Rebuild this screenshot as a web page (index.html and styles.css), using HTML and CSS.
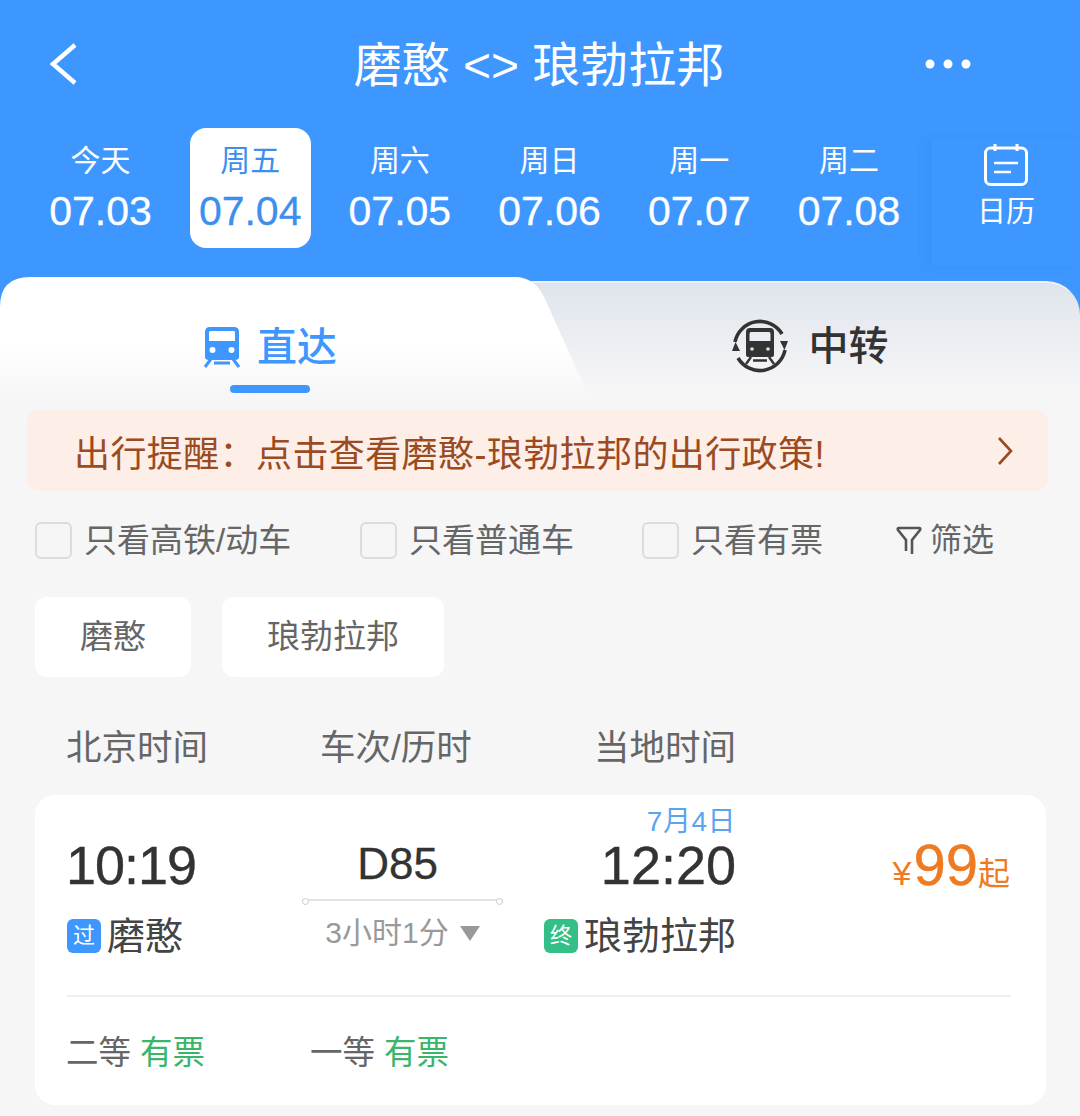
FILE: index.html
```html
<!DOCTYPE html>
<html>

<head>
    <title>车票查询</title>
    <meta charset="utf-8">
    <link rel="stylesheet" href="styles.css">
</head>

<body>
    <div class="top">
        <div class="nav">
            <svg class="back" width="30" height="44" viewBox="0 0 30 44"><path d="M27 3 L5 22 L27 41" fill="none" stroke="#fff" stroke-width="4.500"/></svg>
            <div class="title">磨憨 &lt;&gt; 琅勃拉邦</div>
            <svg class="more" width="46" height="10" viewBox="0 0 46 10"><circle cx="5" cy="5" r="4.500" fill="#fff"/><circle cx="23" cy="5" r="4.500" fill="#fff"/><circle cx="41" cy="5" r="4.500" fill="#fff"/></svg>
        </div>
        <div class="days">
            <div class="day"><span class="week">今天</span><span class="date">07.03</span></div>
            <div class="day on"><span class="week">周五</span><span class="date">07.04</span></div>
            <div class="day"><span class="week">周六</span><span class="date">07.05</span></div>
            <div class="day"><span class="week">周日</span><span class="date">07.06</span></div>
            <div class="day"><span class="week">周一</span><span class="date">07.07</span></div>
            <div class="day"><span class="week">周二</span><span class="date">07.08</span></div>
            <div class="calendar">
                <svg width="46" height="44" viewBox="0 0 46 44"><rect x="2.500" y="5" width="41" height="36.500" rx="5" fill="none" stroke="#fff" stroke-width="3"/><path d="M12 1 V8 M34 1 V8" stroke="#fff" stroke-width="3"/><path d="M11 20 H35 M11 29 H28" stroke="#fff" stroke-width="2.600"/></svg>
                <span>日历</span>
            </div>
        </div>
    </div>

    <div class="tabs">
        <div class="tab tab-on">
            <div class="tab-label">
                <svg width="38" height="42" viewBox="0 0 38 42"><path d="M7 1 H31 Q36 1 36 6 V31 Q36 34 32 34 H6 Q2 34 2 31 V6 Q2 1 7 1 Z M7 5 Q6 5 6 7 V15 H32 V7 Q32 5 31 5 Z" fill="#3d97ff" fill-rule="evenodd"/><circle cx="9.500" cy="24" r="3" fill="#fff"/><circle cx="28.500" cy="24" r="3" fill="#fff"/><path d="M8 33 L2 41 M30 33 L36 41 M11 37 H27" stroke="#3d97ff" stroke-width="3" fill="none"/></svg>
                <span>直达</span>
            </div>
            <div class="tab-line"></div>
        </div>
        <div class="tab tab-off">
            <div class="tab-label">
                <svg width="58" height="58" viewBox="0 0 58 58">
                    <path d="M4 25 A25.500 25.500 0 0 1 51 17 M54 33 A25.500 25.500 0 0 1 7 41" fill="none" stroke="#333" stroke-width="3.600"/>
                    <path d="M49 24 L57 24 L53.500 33 Z M9 34 L1 34 L4.500 25 Z" fill="#333"/>
                    <path d="M19 11 H39 Q43 11 43 15 V38 Q43 40 40 40 H18 Q15 40 15 38 V15 Q15 11 19 11 Z M20 15 Q18.500 15 18.500 17 V24 H39.500 V17 Q39.500 15 38 15 Z" fill="#333" fill-rule="evenodd"/>
                    <circle cx="21" cy="32" r="1.800" fill="#dfe4ec"/><circle cx="37" cy="32" r="1.800" fill="#dfe4ec"/>
                    <path d="M20 40 L15 47 M38 40 L43 47 M22 43.500 H36" stroke="#333" stroke-width="2.400" fill="none"/>
                </svg>
                <span>中转</span>
            </div>
        </div>
    </div>

    <div class="notice">
        <span>出行提醒：点击查看磨憨-琅勃拉邦的出行政策!</span>
        <svg width="16" height="30" viewBox="0 0 16 30"><path d="M2 2 L14 15 L2 28" fill="none" stroke="#9c4a1f" stroke-width="2.600"/></svg>
    </div>

    <div class="filters">
        <div class="check"><i></i>只看高铁/动车</div>
        <div class="check"><i></i>只看普通车</div>
        <div class="check"><i></i>只看有票</div>
        <div class="filter-btn">
            <svg width="26" height="32" viewBox="0 0 26 32"><path d="M10 26 V15 L2 5 Q1 3 3 3 H23 Q25 3 24 5 L16 15 V29" fill="none" stroke="#555" stroke-width="2.600"/></svg>
            筛选
        </div>
    </div>

    <div class="chips">
        <div class="chip">磨憨</div>
        <div class="chip">琅勃拉邦</div>
    </div>

    <div class="heads">
        <div>北京时间</div>
        <div>车次/历时</div>
        <div>当地时间</div>
    </div>

    <div class="card">
        <div class="train">
            <div class="col col-from">
                <div class="time narrow">10:19</div>
                <div class="station"><b class="badge blue">过</b>磨憨</div>
            </div>
            <div class="col col-mid">
                <div class="code">D85</div>
                <div class="track"></div>
                <div class="dur">3小时1分<i class="tri"></i></div>
            </div>
            <div class="col col-to">
                <div class="arrive-date">7月4日</div>
                <div class="time">12:20</div>
                <div class="station"><b class="badge green">终</b>琅勃拉邦</div>
            </div>
            <div class="col col-price">
                <span class="yen">¥</span><span class="num">99</span><span class="qi">起</span>
            </div>
        </div>
        <div class="seats">
            <div class="seat">二等 <em>有票</em></div>
            <div class="seat">一等 <em>有票</em></div>
        </div>
    </div>
</body>

</html>
```

FILE: styles.css
```css
* {
    box-sizing: border-box;
}

html,
body {
    margin: 0;
    height: 1116px;
    overflow: hidden;
}

body {
    background-color: #f6f6f7;
    font-family: "Liberation Sans", "Noto Sans CJK SC", sans-serif;
    color: #666;
}

/* cabecera azul */
.top {
    background-color: #3d97ff;
    height: 277px;
    color: #fff;
}

.nav {
    display: grid;
    grid-template-columns: 1fr auto 1fr;
    align-items: center;
    height: 128px;
    padding: 0 48px;
}

.title {
    font-size: 48px;
    line-height: 60px;
    margin: 4px 0 0 -2px;
}

.more {
    justify-self: end;
    margin-right: 61px;
}

.days {
    display: flex;
    gap: 28.7px;
    height: 120px;
    padding-left: 40px;
}

.day {
    flex: none;
    width: 121px;
    height: 120px;
    border-radius: 16px;
    display: flex;
    flex-direction: column;
    align-items: center;
    padding-top: 13px;
}

.day.on {
    background-color: #fff;
    color: #3d8fef;
}

.week {
    font-size: 30px;
    line-height: 40px;
}

.date {
    font-size: 41px;
    line-height: 50px;
    margin-top: 5px;
    -webkit-text-stroke: .3px;
}

.calendar {
    flex: none;
    width: 148px;
    height: 126px;
    margin: 12px 0 0 -6px;
    padding-top: 3px;
    background-color: #3d97ff;
    box-shadow: -6px 0 8px rgba(40, 120, 225, .14);
    display: flex;
    flex-direction: column;
    align-items: center;
    font-size: 29px;
    line-height: 38px;
}

.calendar span {
    margin-top: 6px;
}

/* pestanas */
.tabs {
    display: flex;
    height: 133px;
    background-color: #3d97ff;
}

.tab-on {
    position: relative;
    z-index: 1;
    width: 590px;
    padding-right: 50px;
    padding-top: 48px;
    background: linear-gradient(#fff 0, #fff 70px, #f6f6f7 118px);
    clip-path: path("M0 133 V30 Q0 0 30 0 H515 Q535 0 545 22 L590 122 V133 Z");
}

.tab-off {
    flex: 1;
    margin-top: 4px;
    margin-left: -100px;
    padding-left: 50px;
    padding-top: 34px;
    border-top: 2px solid #eef2f8;
    border-top-right-radius: 34px;
    background: linear-gradient(#dfe4ec, #f6f6f7 105px);
}

.tab-label {
    display: flex;
    justify-content: center;
    align-items: center;
    gap: 16px;
    font-size: 40px;
    line-height: 44px;
    font-weight: 500;
    color: #3d97ff;
}

.tab-off .tab-label {
    color: #333;
    gap: 20px;
    margin-left: -1px;
}

.tab-line {
    width: 80px;
    height: 8px;
    margin: 16px auto 0;
    border-radius: 4px;
    background-color: #3d97ff;
}

/* aviso */
.notice {
    display: flex;
    justify-content: space-between;
    align-items: center;
    height: 81px;
    margin: 0 32px 0 27px;
    padding: 0 35px 0 47px;
    border-radius: 12px;
    background-color: #fdeee7;
    color: #9c4a1f;
    font-size: 36px;
    letter-spacing: .4px;
}

.filters {
    display: grid;
    grid-template-columns: 325px 282px 254px auto;
    align-items: center;
    height: 37px;
    margin-top: 31px;
    padding-left: 35px;
    font-size: 33px;
    line-height: 37px;
}

.check {
    display: flex;
    align-items: center;
    gap: 12px;
}

.check i {
    width: 37px;
    height: 37px;
    border: 2px solid #dcdcdc;
    border-radius: 6px;
}

.filter-btn {
    display: flex;
    align-items: center;
    gap: 8px;
    font-size: 32px;
}

.chips {
    display: flex;
    gap: 31px;
    margin-top: 38px;
    padding-left: 35px;
}

.chip {
    height: 80px;
    padding: 0 45px;
    border-radius: 12px;
    background-color: #fff;
    font-size: 33px;
    line-height: 80px;
}

.heads {
    display: grid;
    grid-template-columns: 254px 274px auto;
    margin-top: 46px;
    padding-left: 66px;
    font-size: 35.5px;
    line-height: 50px;
}

/* tarjeta del tren */
.card {
    height: 310px;
    margin: 22px 34px 0 35px;
    padding: 0 35px 0 32px;
    border-radius: 20px;
    background-color: #fff;
}

.train {
    display: grid;
    grid-template-columns: 235px 201px 233px 275px;
    height: 202px;
    border-bottom: 2px solid #f0f0f0;
}

.col-from {
    padding-top: 40px;
}

.col-mid {
    padding-top: 41px;
}

.col-to {
    padding-top: 13px;
    text-align: right;
}

.arrive-date {
    font-size: 28px;
    line-height: 27px;
    letter-spacing: .5px;
    color: #5ba5f0;
}

.time {
    font-size: 54px;
    line-height: 60px;
    color: #333;
    -webkit-text-stroke: .4px;
}

.narrow {
    letter-spacing: -1px;
    margin-left: -1px;
}

.station {
    display: flex;
    align-items: center;
    margin-top: 19px;
    font-size: 38px;
    line-height: 44px;
    color: #444;
}

.col-to .station {
    justify-content: flex-end;
}

.badge {
    width: 34px;
    height: 34px;
    margin-right: 6px;
    border-radius: 6px;
    color: #fff;
    font-size: 22px;
    font-weight: normal;
    line-height: 34px;
    text-align: center;
}

.blue {
    background-color: #3d97ff;
}

.green {
    background-color: #33bf85;
}

.col-mid {
    text-align: center;
}

.code {
    font-size: 44px;
    line-height: 56px;
    color: #333;
    padding-right: 10px;
    -webkit-text-stroke: .3px;
}

.track {
    position: relative;
    height: 2px;
    margin-top: 7px;
    background-color: #e4e4e4;
}

.track::before,
.track::after {
    content: "";
    position: absolute;
    top: -1px;
    width: 5px;
    height: 5px;
    border: 1px solid #ccc;
    border-radius: 50%;
    background-color: #fff;
}

.track::before {
    left: 0;
}

.track::after {
    right: 0;
}

.dur {
    display: flex;
    align-items: center;
    justify-content: center;
    margin-top: 10px;
    font-size: 30px;
    line-height: 44px;
    color: #999;
}

.tri {
    width: 0;
    height: 0;
    margin-left: 11px;
    border-style: solid;
    border-width: 15px 10px 0;
    border-color: #999 transparent transparent;
}

.col-price {
    padding-top: 37px;
    padding-right: 1px;
    text-align: right;
    color: #ee7a22;
    line-height: 66px;
    white-space: nowrap;
}

.yen {
    font-size: 34px;
    margin-right: 2px;
}

.num {
    font-size: 58px;
    -webkit-text-stroke: .4px;
}

.qi {
    font-size: 32px;
}

.seats {
    display: grid;
    grid-template-columns: 244px 244px;
    height: 106px;
    margin-left: -1px;
    font-size: 32.5px;
    line-height: 112px;
}

.seat em {
    font-style: normal;
    color: #3bb56a;
}
```
